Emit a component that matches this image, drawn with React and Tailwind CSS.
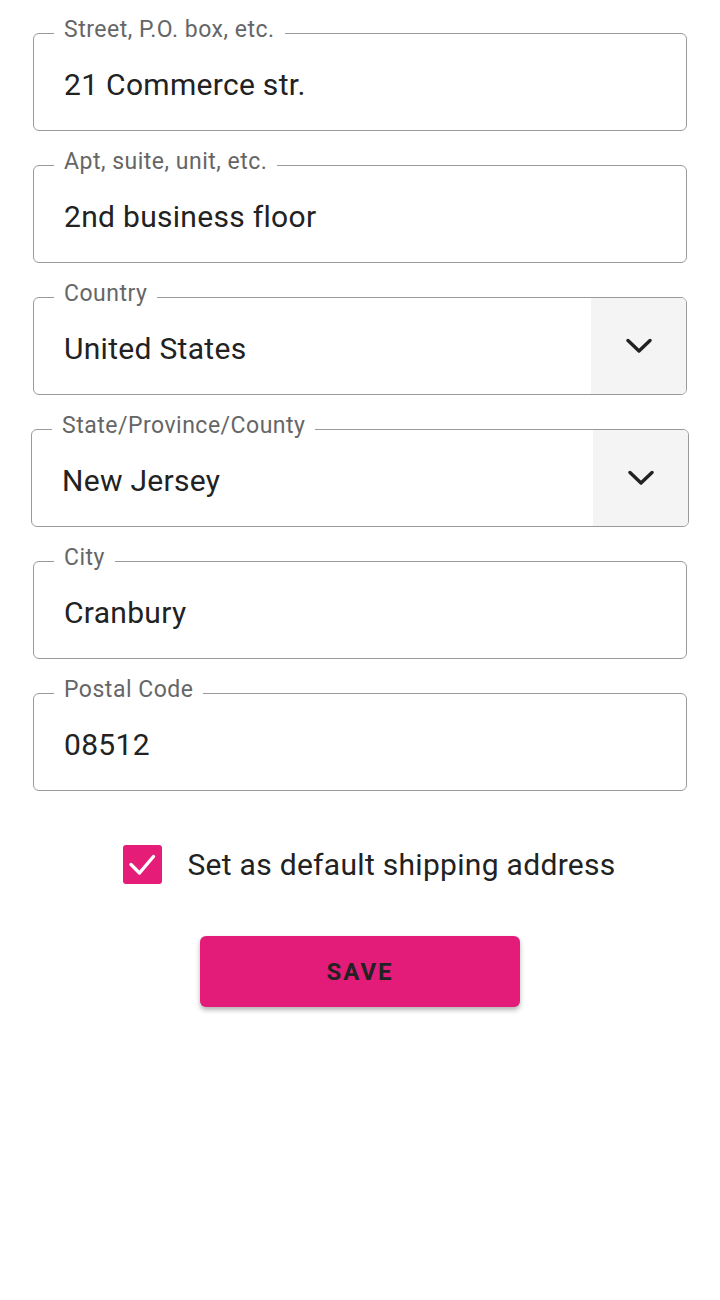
import React from "react";

const font = { fontFamily: "Roboto, 'Noto Sans', sans-serif" };

const Chevron = () => (
  <svg width="26" height="16" viewBox="0 0 26 16" fill="none">
    <path
      d="M2 2.5 L13 13 L24 2.5"
      stroke="#222"
      strokeWidth="3.4"
      strokeLinecap="round"
      strokeLinejoin="round"
    />
  </svg>
);

const Field = ({ label, value, select, wide }) => (
  <div
    className={
      "relative h-[98px] border border-[#9a9a9a] rounded-[6px] flex items-stretch" +
      (wide ? " -mx-[2px]" : "")
    }
  >
    <span className="absolute left-[20px] -top-[18px] px-[10px] bg-white text-[23px] leading-[28px] text-[#666] tracking-[0.5px]">
      {label}
    </span>
    <div className="flex-1 flex items-center pl-[30px] pt-[5px] text-[30px] tracking-[0.3px] text-[#222]">
      {value}
    </div>
    {select && (
      <div className="w-[95px] bg-[#f4f4f4] rounded-r-[5px] flex items-center justify-center">
        <Chevron />
      </div>
    )}
  </div>
);

const App = () => {
  const fields = [
    { label: "Street, P.O. box, etc.", value: "21 Commerce str." },
    { label: "Apt, suite, unit, etc.", value: "2nd business floor" },
    { label: "Country", value: "United States", select: true },
    {
      label: "State/Province/County",
      value: "New Jersey",
      select: true,
      wide: true,
    },
    { label: "City", value: "Cranbury" },
    { label: "Postal Code", value: "08512" },
  ];

  return (
    <div className="min-h-screen bg-white" style={font}>
      <div className="px-[33px] pt-[33px]">
        <div className="flex flex-col gap-[34px]">
          {fields.map((f, i) => (
            <Field key={i} {...f} />
          ))}
        </div>

        {/* default address checkbox */}
        <div className="mt-[51px] flex items-center justify-center gap-[25px] pl-[19px]">
          <div className="w-[39px] h-[39px] rounded-[3px] bg-[#e51c78] flex items-center justify-center">
            <svg width="39" height="39" viewBox="0 0 39 39" fill="none">
              <path
                d="M8 19.5 L16.5 28 L30.5 11.5"
                stroke="white"
                strokeWidth="3.4"
                strokeLinecap="round"
                strokeLinejoin="round"
              />
            </svg>
          </div>
          <span className="text-[30px] tracking-[0.3px] text-[#222]">
            Set as default shipping address
          </span>
        </div>

        <div className="mt-[49px] flex justify-center">
          <button className="w-[320px] h-[71px] rounded-[6px] bg-[#e31c79] text-[#222] text-[24px] font-bold tracking-[2px] shadow-[0_3px_5px_rgba(0,0,0,0.3)]">
            SAVE
          </button>
        </div>
      </div>
    </div>
  );
};

export default App;
